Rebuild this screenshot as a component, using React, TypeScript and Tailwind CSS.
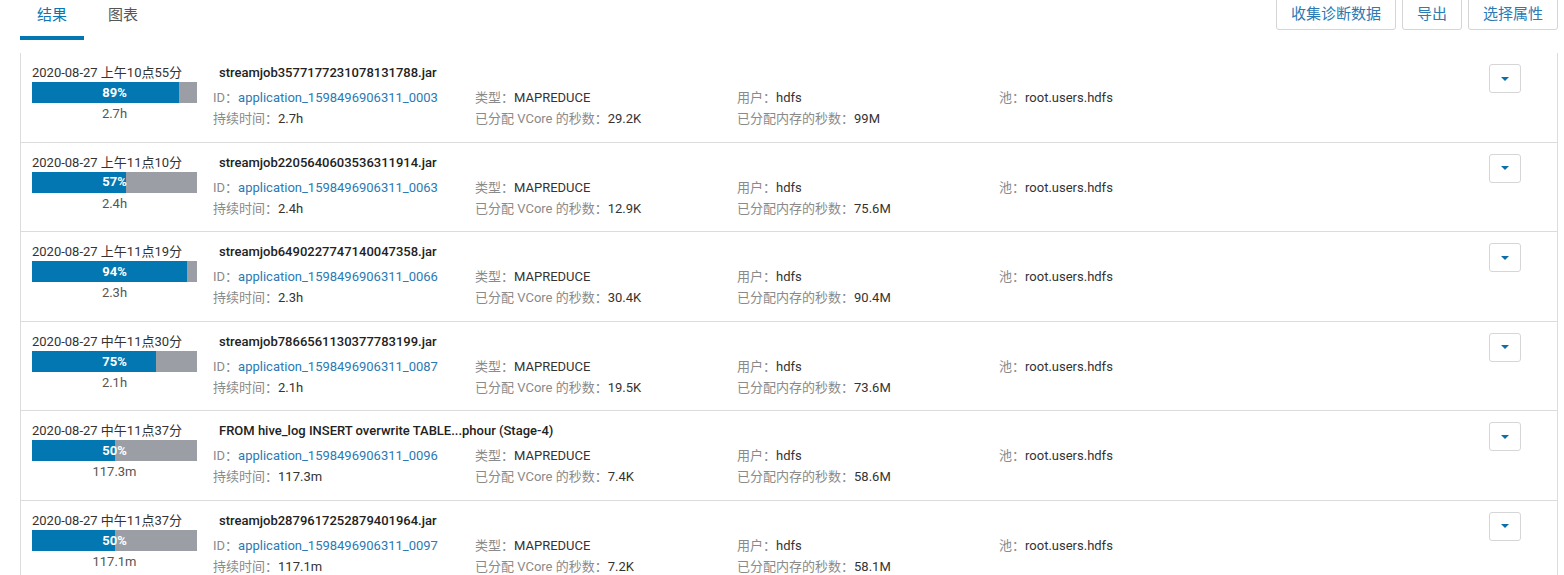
import React from 'react'

type Job = {
  date: string
  pct: number
  dur: string
  name: string
  id: string
  vcore: string
  mem: string
}

const JOBS: Job[] = [
  { date: '2020-08-27 上午10点55分', pct: 89, dur: '2.7h', name: 'streamjob3577177231078131788.jar', id: 'application_1598496906311_0003', vcore: '29.2K', mem: '99M' },
  { date: '2020-08-27 上午11点10分', pct: 57, dur: '2.4h', name: 'streamjob2205640603536311914.jar', id: 'application_1598496906311_0063', vcore: '12.9K', mem: '75.6M' },
  { date: '2020-08-27 上午11点19分', pct: 94, dur: '2.3h', name: 'streamjob6490227747140047358.jar', id: 'application_1598496906311_0066', vcore: '30.4K', mem: '90.4M' },
  { date: '2020-08-27 中午11点30分', pct: 75, dur: '2.1h', name: 'streamjob7866561130377783199.jar', id: 'application_1598496906311_0087', vcore: '19.5K', mem: '73.6M' },
  { date: '2020-08-27 中午11点37分', pct: 50, dur: '117.3m', name: 'FROM hive_log INSERT overwrite TABLE...phour (Stage-4)', id: 'application_1598496906311_0096', vcore: '7.4K', mem: '58.6M' },
  { date: '2020-08-27 中午11点37分', pct: 50, dur: '117.1m', name: 'streamjob2879617252879401964.jar', id: 'application_1598496906311_0097', vcore: '7.2K', mem: '58.1M' },
]

const FONT = "font-['Roboto','Noto_Sans_CJK_SC',sans-serif]"

function Field({ label, value, link }: { label: string; value: string; link?: boolean }) {
  return (
    <div className="whitespace-nowrap">
      <span className="text-[#8a8a8a]">{label}：</span>
      <span className={link ? 'text-[#2a7ab4]' : 'text-[#333]'}>{value}</span>
    </div>
  )
}

function JobRow({ job }: { job: Job }) {
  return (
    <div className="flex h-[89.6px] border-b border-[#dcdcdc] pl-[11px] pr-[36px]">
      {/* time + progress */}
      <div className="w-[165px] shrink-0 pt-[11px]">
        <div className="whitespace-nowrap text-[13px] leading-[18px] text-[#333]">{job.date}</div>
        <div className="relative flex h-[21px] bg-[#9b9ea4]">
          <div className="h-full bg-[#0277b2]" style={{ width: `${job.pct}%` }} />
          <span className="absolute inset-0 flex items-center justify-center text-[13px] font-bold text-white">
            {job.pct}%
          </span>
        </div>
        <div className="mt-[2px] text-center text-[13px] leading-[18px] text-[#555]">{job.dur}</div>
      </div>

      {/* details */}
      <div className="ml-[16px] flex-1 pt-[11px] text-[13px]">
        <div className="pl-[6px] text-[13px] font-medium leading-[18px] text-[#222]">{job.name}</div>
        <div className="mt-[5px] grid grid-cols-[262px_262px_262px_262px] leading-[21px]">
          <Field label="ID" value={job.id} link />
          <Field label="类型" value="MAPREDUCE" />
          <Field label="用户" value="hdfs" />
          <Field label="池" value="root.users.hdfs" />
          <Field label="持续时间" value={job.dur} />
          <Field label="已分配 VCore 的秒数" value={job.vcore} />
          <Field label="已分配内存的秒数" value={job.mem} />
        </div>
      </div>

      <div className="pt-[11px]">
        <button className="flex h-[29px] w-[32px] items-center justify-center rounded-[3px] border border-[#d6d6d6] bg-white">
          <svg width="10" height="6" viewBox="0 0 10 6">
            <path d="M1 1h8L5 5z" fill="#0a6fa8" />
          </svg>
        </button>
      </div>
    </div>
  )
}

export default function App() {
  return (
    <div className={`${FONT} h-[575px] overflow-hidden bg-white pl-[20px] pr-[6px]`}>
      {/* header: tabs + actions */}
      <div className="flex items-start">
        <div className="flex">
          <div className="h-[40px] border-b-4 border-[#0277b2] px-[17px] pt-[4px] text-[15px] leading-[22px] text-[#0a77b3]">
            结果
          </div>
          <div className="ml-[7px] h-[40px] px-[17px] pt-[4px] text-[15px] leading-[22px] text-[#555]">图表</div>
        </div>
        <div className="ml-auto flex gap-[6px]">
          {['收集诊断数据', '导出', '选择属性'].map((b) => (
            <button
              key={b}
              className="-mt-[3px] h-[33px] rounded-[3px] border border-[#d5d5d5] bg-white px-[14px] text-[15px] leading-[22px] text-[#2a7ab4]"
            >
              {b}
            </button>
          ))}
        </div>
      </div>

      {/* job list */}
      <div className="mt-[13px] border-l border-r border-[#dcdcdc]">
        {JOBS.map((j, i) => (
          <JobRow key={i} job={j} />
        ))}
      </div>
    </div>
  )
}
